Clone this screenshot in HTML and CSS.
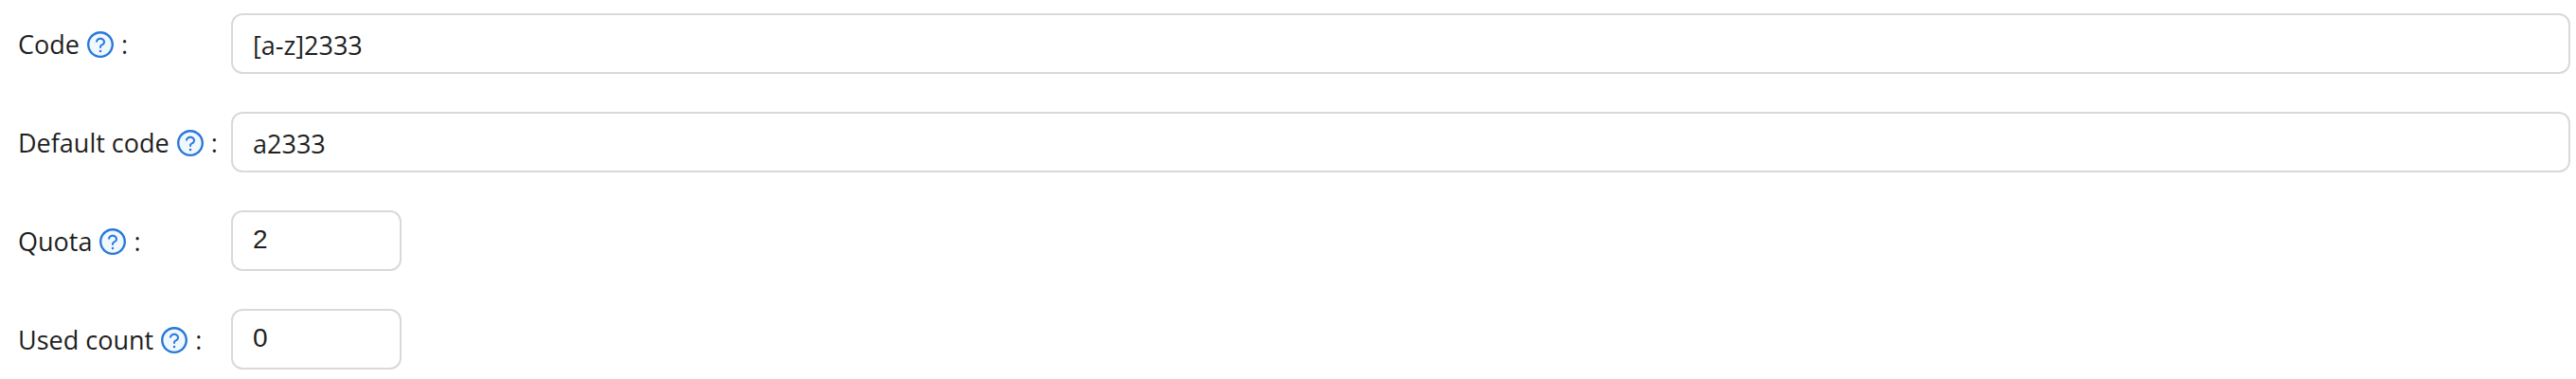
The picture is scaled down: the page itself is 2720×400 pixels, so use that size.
FILE: index.html
```html
<!DOCTYPE html>
<html lang="en">
<head>
<meta charset="utf-8">
<title>Code settings</title>
<link rel="stylesheet" href="styles.css">
</head>
<body>
<svg class="defs" aria-hidden="true">
  <symbol id="help" viewBox="0 0 1024 1024">
    <circle class="help-disc" cx="512" cy="512" r="410"/>
    <path d="M512 64C264.6 64 64 264.6 64 512s200.6 448 448 448 448-200.6 448-448S759.4 64 512 64zm0 820c-205.4 0-372-166.6-372-372s166.6-372 372-372 372 166.6 372 372-166.6 372-372 372z"/>
    <path d="M623.6 316.7C593.6 290.4 554 276 512 276s-81.6 14.5-111.6 40.7C369.2 344 352 380.7 352 420v7.6c0 4.4 3.6 8 8 8h48c4.4 0 8-3.6 8-8V420c0-44.1 43.1-80 96-80s96 35.9 96 80c0 31.1-22 59.6-56.1 72.7-21.2 8.1-39.2 22.3-52.1 40.9-13.1 19-19.9 41.8-19.9 64.9V620c0 4.4 3.6 8 8 8h48c4.4 0 8-3.6 8-8v-22.7a48.3 48.3 0 0130.9-44.8c59-22.7 97.1-74.7 97.1-132.5.1-39.3-17.1-76-48.3-103.3zM472 732a40 40 0 1080 0 40 40 0 10-80 0z"/>
  </symbol>
</svg>
<form class="form">
  <div class="row">
    <label class="label" for="code">Code<svg class="icon" aria-hidden="true"><use href="#help"/></svg>:</label>
    <input class="field" id="code" type="text" value="[a-z]2333">
  </div>
  <div class="row">
    <label class="label" for="default-code">Default code<svg class="icon" aria-hidden="true"><use href="#help"/></svg>:</label>
    <input class="field" id="default-code" type="text" value="a2333">
  </div>
  <div class="row">
    <label class="label" for="quota">Quota<svg class="icon" aria-hidden="true"><use href="#help"/></svg>:</label>
    <input class="field number" id="quota" type="text" inputmode="numeric" value="2">
  </div>
  <div class="row">
    <label class="label" for="used-count">Used count<svg class="icon" aria-hidden="true"><use href="#help"/></svg>:</label>
    <input class="field number" id="used-count" type="text" inputmode="numeric" value="0">
  </div>
</form>
</body>
</html>
```
FILE: styles.css
```css
* {
  box-sizing: border-box;
}

body {
  margin: 0;
  background: #fff;
  color: #1f1f1f;
  font-family: "Segoe UI", "Open Sans", sans-serif;
  font-size: 27px;
}

.defs {
  display: none;
}

.form {
  display: flex;
  flex-direction: column;
  gap: 40px;
  padding: 14px 6px 0 19px;
}

.row {
  display: grid;
  grid-template-columns: 225px 1fr;
  align-items: center;
}

.label {
  display: flex;
  align-items: center;
  gap: 6px;
  padding-top: 2px;
  line-height: 36px;
  white-space: nowrap;
}

.icon {
  width: 32px;
  height: 32px;
  fill: #2a78d8;
}

.help-disc {
  fill: #f0f8ff;
}

.field {
  width: 100%;
  height: 64px;
  margin: 0;
  padding: 2px 21px 0;
  border: 2px solid #d9d9d9;
  border-radius: 12px;
  background: #fff;
  color: inherit;
  font: inherit;
  outline: none;
}

.number {
  width: 180px;
  padding: 0 21px 2px;
  font-family: "Liberation Sans", Arial, sans-serif;
  font-size: 28px;
}
```
